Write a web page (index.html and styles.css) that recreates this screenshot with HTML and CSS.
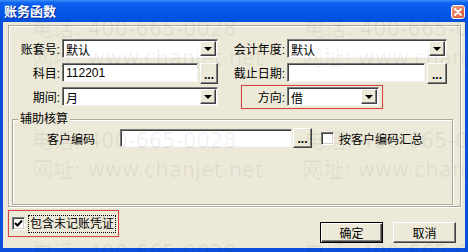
FILE: index.html
```html
<!DOCTYPE html>
<html lang="zh-CN">
<head>
<meta charset="UTF-8">
<title>账务函数</title>
<link rel="stylesheet" href="styles.css">
</head>
<body>
<div class="window">
    <div class="titlebar">
        <span class="title">账务函数</span>
        <span class="close">
            <svg width="14" height="14" viewBox="0 0 14 14">
                <defs>
                    <linearGradient id="cg" x1="0" y1="0" x2="1" y2="1">
                        <stop offset="0" stop-color="#f0a184"/>
                        <stop offset="1" stop-color="#d8522f"/>
                    </linearGradient>
                </defs>
                <rect x="0.5" y="0.5" width="13" height="13" rx="2.5" fill="url(#cg)" stroke="#fff"/>
                <path d="M4 4 L10 10 M10 4 L4 10" stroke="#fff" stroke-width="1.8" stroke-linecap="round"/>
            </svg>
        </span>
    </div>
    <div class="client">
        <div class="frame">
            <div class="rows">
                <div class="row">
                    <div class="cell left">
                        <span class="lbl lbl-left">账套号:</span>
                        <div class="combo w156"><span class="val">默认</span><span class="drop"></span></div>
                    </div>
                    <div class="cell">
                        <span class="lbl lbl-right">会计年度:</span>
                        <div class="combo w160"><span class="val">默认</span><span class="drop"></span></div>
                    </div>
                </div>
                <div class="row">
                    <div class="cell left">
                        <span class="lbl lbl-left">科目:</span>
                        <div class="edit w136"><span class="val">112201</span></div>
                        <span class="dots w18">...</span>
                    </div>
                    <div class="cell">
                        <span class="lbl lbl-right">截止日期:</span>
                        <div class="edit w138"></div>
                        <span class="dots w20">...</span>
                    </div>
                </div>
                <div class="row">
                    <div class="cell left">
                        <span class="lbl lbl-left">期间:</span>
                        <div class="combo w156"><span class="val">月</span><span class="drop"></span></div>
                    </div>
                    <div class="cell">
                        <div class="mark dir">
                            <span class="lbl lbl-dir">方向:</span>
                            <div class="combo w92"><span class="val">借</span><span class="drop"></span></div>
                        </div>
                    </div>
                </div>
            </div>

            <div class="group">
                <span class="group-title">辅助核算</span>
                <div class="group-row">
                    <span class="lbl-code">客户编码</span>
                    <div class="edit code"></div>
                    <span class="dots w19">...</span>
                    <span class="checkbox sum"></span>
                    <span class="check-text">按客户编码汇总</span>
                </div>
            </div>
        </div>

        <div class="footer">
            <div class="mark include">
                <span class="checkbox">
                    <svg width="11" height="11" viewBox="0 0 11 11">
                        <polyline points="2,5 4.5,7.5 9,2.5" fill="none" stroke="#000" stroke-width="2"/>
                    </svg>
                </span>
                <span class="focus">包含未记账凭证</span>
            </div>
            <div class="actions">
                <span class="btn default">确定</span>
                <span class="btn">取消</span>
            </div>
        </div>
    </div>

    <!-- watermark tiles -->
    <div class="wm" style="left:32px;top:17px">电话: 400-665-0028</div>
    <div class="wm" style="left:304px;top:17px">电话: 400-665-0028</div>
    <div class="wm" style="left:32px;top:46px">网址: www.chanjet.net</div>
    <div class="wm" style="left:302px;top:46px">网址: www.chanjet.net</div>
    <div class="wm" style="left:32px;top:129px">电话: 400-665-0028</div>
    <div class="wm" style="left:304px;top:129px">电话: 400-665-0028</div>
    <div class="wm" style="left:32px;top:158px">网址: www.chanjet.net</div>
    <div class="wm" style="left:302px;top:158px">网址: www.chanjet.net</div>
    <div class="wm" style="left:32px;top:241px">电话: 400-665-0028</div>
    <div class="wm" style="left:304px;top:241px">电话: 400-665-0028</div>
</div>
</body>
</html>
```

FILE: styles.css
```css
* {
    box-sizing: border-box;
}

body {
    margin: 0;
    font-family: "Liberation Sans", "Noto Sans CJK SC", sans-serif;
    font-size: 12px;
    color: #000;
    background: #0a4fd8;
}

.window {
    position: relative;
    width: 468px;
    height: 252px;
    display: flex;
    flex-direction: column;
    background: #0b50dc;
    overflow: hidden;
}

.titlebar {
    height: 22px;
    display: flex;
    align-items: center;
    padding: 0 4px;
    background: linear-gradient(#3d8ef8 0, #0c61ee 3px, #0558e8 50%, #0250e0 100%);
}

.title {
    color: #fff;
    font-family: "Noto Sans CJK SC", sans-serif;
    font-weight: bold;
    font-size: 13px;
    text-shadow: 1px 1px 0 #0a2e9a;
    margin-top: -1px;
}

.close {
    margin-left: auto;
    margin-right: -1px;
    margin-top: 1px;
    display: flex;
}

.client {
    flex: 1;
    margin: 0 3px 4px 3px;
    background: #ece9d8;
    display: flex;
    flex-direction: column;
}

.frame {
    margin: 3px 4px 0 5px;
    padding: 13px 0 1px 0;
    border: 1px solid #aca899;
    box-shadow: inset 1px 1px 0 #fff, 1px 1px 0 #fff;
}

.rows {
    display: flex;
    flex-direction: column;
    gap: 5px;
}

.row {
    display: flex;
    height: 19px;
    align-items: center;
}

.cell {
    display: flex;
    align-items: center;
    height: 19px;
}

.cell.left {
    width: 211px;
}

.lbl {
    text-align: right;
    white-space: nowrap;
    margin-right: 2px;
}

.lbl-left { width: 51px; }
.lbl-right { width: 65px; }
.lbl-dir { width: 43px; }

.combo,
.edit {
    height: 19px;
    background: #fff;
    border: 1px solid;
    border-color: #7b7b7b #f4f4f4 #f4f4f4 #7b7b7b;
    box-shadow: inset 1px 1px 0 #404040;
    display: flex;
    align-items: center;
    padding: 1px 1px 0 3px;
}

.val {
    flex: 1;
    white-space: nowrap;
}

.w156 { width: 156px; }
.w160 { width: 160px; }
.w92 { width: 92px; }
.w136 { width: 136px; }
.w138 { width: 138px; }

.drop {
    width: 16px;
    height: 15px;
    margin-top: -1px;
    background: #ece9d8;
    border: 1px solid;
    border-color: #fff #404040 #404040 #fff;
    box-shadow: inset -1px -1px 0 #808080;
    display: flex;
    align-items: center;
    justify-content: center;
}

.drop::after {
    content: "";
    border-top: 4px solid #000;
    border-left: 4px solid transparent;
    border-right: 4px solid transparent;
    margin-top: 1px;
}

.dots {
    height: 21px;
    margin-left: 2px;
    margin-top: 2px;
    background: #ece9d8;
    border: 1px solid;
    border-color: #fff #404040 #404040 #fff;
    box-shadow: inset -1px -1px 0 #808080;
    font-weight: bold;
    display: flex;
    align-items: flex-end;
    justify-content: center;
    padding-bottom: 3px;
    line-height: 10px;
}

.w18 { width: 18px; }
.w19 { width: 19px; }
.w20 { width: 20px; }

.mark {
    border: 1px solid #d2473f;
    box-shadow: 0 0 1px #f0a0a0;
    display: flex;
    align-items: center;
}

.dir {
    height: 24px;
    margin-left: 21px;
    padding-right: 3px;
    flex-shrink: 0;
}

.group {
    margin: 13px 7px 0 3px;
    height: 86px;
    border: 1px solid #aca899;
    box-shadow: inset 1px 1px 0 #fff, 1px 1px 0 #fff;
}

.group-title {
    display: block;
    width: fit-content;
    margin: -8px 0 0 5px;
    padding: 0 2px;
    line-height: 14px;
    background: #ece9d8;
}

.group-row {
    display: flex;
    align-items: center;
    height: 20px;
    margin-top: 2px;
    padding-left: 34px;
}

.lbl-code {
    width: 48px;
    white-space: nowrap;
}

.edit.code {
    width: 172px;
    height: 18px;
    margin-left: 25px;
}

.group-row .dots {
    height: 20px;
    margin-left: 1px;
    margin-top: 0;
}

.checkbox {
    width: 13px;
    height: 13px;
    background: #fff;
    border: 1px solid;
    border-color: #808080 #fff #fff #808080;
    box-shadow: inset 1px 1px 0 #404040, inset -1px -1px 0 #d4d0c8;
    display: flex;
    align-items: center;
    justify-content: center;
    flex-shrink: 0;
}

.checkbox.sum {
    margin-left: 9px;
}

.check-text {
    margin-left: 5px;
    white-space: nowrap;
}

.footer {
    display: flex;
    align-items: flex-start;
    margin-top: 3px;
    padding-left: 5px;
}

.include {
    height: 27px;
    padding: 0 2px 0 3px;
}

.focus {
    margin-left: 3px;
    border: 1px dotted #000;
    padding: 0 1px;
    line-height: 16px;
    white-space: nowrap;
}

.actions {
    display: flex;
    gap: 10px;
    margin-left: auto;
    margin-right: 9px;
    margin-top: 12px;
}

.btn {
    width: 63px;
    height: 21px;
    background: #ece9d8;
    border: 1px solid;
    border-color: #fff #404040 #404040 #fff;
    box-shadow: inset -1px -1px 0 #808080;
    display: flex;
    align-items: center;
    justify-content: center;
}

.btn.default {
    border-color: #000;
    box-shadow: inset 1px 1px 0 #fff, inset -1px -1px 0 #404040, inset -2px -2px 0 #808080;
}

.wm {
    position: absolute;
    font-family: "DejaVu Sans", "Noto Sans CJK SC", sans-serif;
    font-size: 21px;
    line-height: 24px;
    color: rgba(0, 0, 0, 0.06);
    white-space: nowrap;
    pointer-events: none;
}
```
